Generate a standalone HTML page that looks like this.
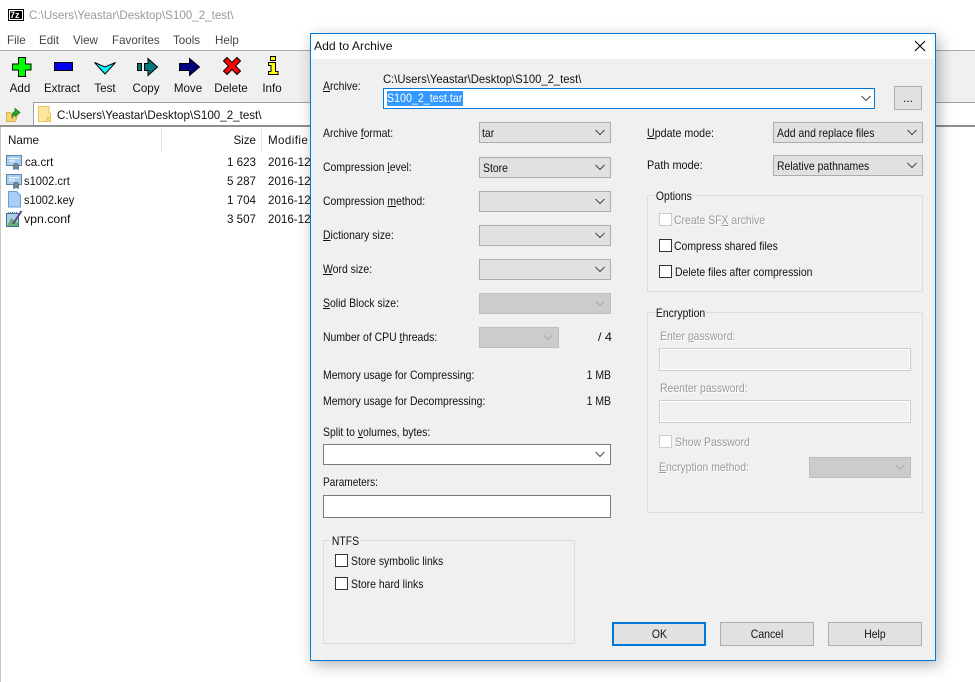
<!DOCTYPE html>
<html><head><meta charset="utf-8"><title>Add to Archive</title>
<style>
html,body{margin:0;padding:0;background:#fff}
body{width:975px;height:682px;overflow:hidden;position:relative;font-family:"Liberation Sans",sans-serif;font-size:11.6px;color:#111}
.a{position:absolute}
.t{position:absolute;line-height:16px;height:16px;white-space:nowrap;margin-top:1px}
.r{text-align:right}
.c{text-align:center}
.g{color:#9a9a9a;text-shadow:1px 1px 0 #fff}
.m{color:#444}
u{text-decoration:underline;text-underline-offset:1px}
.dlg .t{transform:scaleX(.9);transform-origin:0 50%}
.dlg .t.r{transform-origin:100% 50%}
.cb{position:absolute;box-sizing:border-box;height:21px;background:#e1e1e1;border:1px solid #adadad}
.cb.d{background:#ccc;border-color:#bfbfbf}
.cb.w{background:#fff;border-color:#7a7a7a}
.cb svg{position:absolute;right:5px;top:6px}
.ck{position:absolute;box-sizing:border-box;width:13px;height:13px;background:#fff;border:1px solid #333}
.ck.d{border-color:#ccc}
.gb{position:absolute;box-sizing:border-box;border:1px solid #dcdcdc}
.lg{background:#f0f0f0;padding:0 1px}
.btn{position:absolute;box-sizing:border-box;height:24px;width:94px;top:622px;background:#e1e1e1;border:1px solid #adadad;text-align:center;line-height:23px}
.btn span{display:inline-block;transform:scaleX(.9)}
.in{position:absolute;box-sizing:border-box;background:#fff;border:1px solid #7a7a7a}
.dis{position:absolute;box-sizing:border-box;left:659px;width:252px;height:23px;background:#f0f0f0;border:1px solid #ccc;box-shadow:inset 0 0 0 1px #fff}
</style></head><body>

<!-- main window -->
<div class="a" style="left:0;top:50px;width:975px;height:1px;background:#a9a9a9"></div>
<div class="a" style="left:0;top:51px;width:975px;height:75px;background:#f0f0f0"></div>
<div class="a" style="left:33px;top:102px;width:942px;height:1px;background:#a0a0a0"></div>
<div class="a" style="left:33px;top:103px;width:942px;height:22px;background:#fff;border-left:1px solid #a0a0a0;box-sizing:border-box"></div>
<div class="a" style="left:0;top:125px;width:975px;height:2px;background:#8f8f8f"></div>
<div class="a" style="left:0;top:127px;width:1px;height:555px;background:#c8c8c8"></div>

<svg class="a" style="left:8px;top:9px" width="16" height="12"><rect x="0.500" y="0.500" width="15" height="11" fill="#fff" stroke="#000"/><rect x="2" y="2" width="12" height="8" fill="#000"/></svg>
<div class="t" style="left:10px;top:7px;color:#fff;font-size:9px;font-weight:bold;line-height:14px">7z</div>
<div class="t" style="left:29px;top:7px;color:#999">C:\Users\Yeastar\Desktop\S100_2_test\</div>

<div class="t m" style="left:7px;top:32px">File</div>
<div class="t m" style="left:39px;top:32px">Edit</div>
<div class="t m" style="left:73px;top:32px">View</div>
<div class="t m" style="left:112px;top:32px">Favorites</div>
<div class="t m" style="left:173px;top:32px">Tools</div>
<div class="t m" style="left:215px;top:32px">Help</div>

<!-- toolbar icons -->
<svg class="a" style="left:0;top:50px" width="300" height="30" stroke="#000" stroke-width="1" stroke-linejoin="miter">
<path d="M18.500 7.500h7v6.500h5.500v6h-5.500v6.500h-7V20h-6v-6h6z" fill="#00ff00"/>
<rect x="54.500" y="12.500" width="18" height="8" fill="#0000ee"/>
<path d="M94.500 12.500L105 17L115.500 12.500L105 24z" fill="#00ffff"/>
<rect x="137.500" y="13.500" width="4" height="7" fill="#007878"/>
<path d="M144.500 13.500h3.500V8.500L157.500 17L148 25.500V20.500h-3.500z" fill="#007878"/>
<path d="M179.500 13.500h10V8.500L199.500 17L189.500 25.500V20.500h-10z" fill="#000080"/>
<path d="M223.500 11L227 7.500L232 12.500L237 7.500L240.500 11L235.500 16L240.500 21L237 24.500L232 19.500L227 24.500L223.500 21L228.500 16z" fill="#ff0000"/>
<path d="M270.500 6.500h5v4h-5zM268.500 12.500h7v9h2.500v3h-9.500v-3h2.500v-6h-2.500z" fill="#ffff00"/>
</svg>
<div class="t c" style="left:0;top:80px;width:40px">Add</div>
<div class="t c" style="left:40px;top:80px;width:44px">Extract</div>
<div class="t c" style="left:85px;top:80px;width:40px">Test</div>
<div class="t c" style="left:126px;top:80px;width:40px">Copy</div>
<div class="t c" style="left:168px;top:80px;width:40px">Move</div>
<div class="t c" style="left:208px;top:80px;width:46px">Delete</div>
<div class="t c" style="left:252px;top:80px;width:40px">Info</div>

<!-- up folder -->
<svg class="a" style="left:5px;top:105px" width="16" height="18">
<path d="M1.500 7.500h3.500l2 1.500h5.500L10.500 16.500H1.500z" fill="#f6d670" stroke="#d4b050"/>
<path d="M7 13.500C6.500 9 8 7 10 6.500V3.500L15 7.500L10 11.500V9C8.500 9.500 7.500 11 7 13.500z" fill="#35a535" stroke="#17701c" stroke-width=".8"/>
</svg>
<!-- address folder -->
<svg class="a" style="left:37px;top:105px" width="16" height="18">
<path d="M1.500 1.500h10.500v6l1.500 1v8H1.500z" fill="#fde7a0" stroke="#e8c65e"/><path d="M10 12.500h3.500v4H10z" fill="#f6d670" stroke="#e8c65e"/>
</svg>
<div class="t" style="left:57px;top:107px">C:\Users\Yeastar\Desktop\S100_2_test\</div>

<!-- list -->
<div class="a" style="left:161px;top:128px;width:1px;height:24px;background:#e5e5e5"></div>
<div class="a" style="left:261px;top:128px;width:1px;height:24px;background:#e5e5e5"></div>
<div class="t" style="left:8px;top:132px">Name</div>
<div class="t r" style="left:216px;top:132px;width:40px">Size</div>
<div class="t" style="left:268px;top:132px;width:42px;overflow:hidden;letter-spacing:.4px">Modifie</div>

<svg class="a" style="left:5px;top:153px" width="19" height="76">
<g><rect x="1.500" y="2.500" width="15" height="10" fill="#a9cdf0" stroke="#5f87ad"/><path d="M4 5.500h10M4 8h6" stroke="#fff"/><path d="M9 13v4M13 13v4" stroke="#3f7fd0" stroke-width="1.500"/><circle cx="11" cy="13" r="2.500" fill="#7a8b8b" stroke="#5a6a6a"/></g>
<g transform="translate(0,19)"><rect x="1.500" y="2.500" width="15" height="10" fill="#a9cdf0" stroke="#5f87ad"/><path d="M4 5.500h10M4 8h6" stroke="#fff"/><path d="M9 13v4M13 13v4" stroke="#3f7fd0" stroke-width="1.500"/><circle cx="11" cy="13" r="2.500" fill="#7a8b8b" stroke="#5a6a6a"/></g>
<path d="M3.500 38.500h8l4 4v11.500h-12z" fill="#a9cdf5" stroke="#6c9bd0"/>
<path d="M1.500 60.500h12v13h-12z" fill="#a9d0e8" stroke="#3f6f98"/><path d="M2 73L6 65L13 70V73z" fill="#6fb06f"/><path d="M3 59.500h9" stroke="#5f7a95" stroke-dasharray="1 1"/><path d="M8 71L16.500 58" stroke="#5b4a8a" stroke-width="2"/>
</svg>
<div class="t" style="left:25px;top:154px">ca.crt</div>
<div class="t" style="left:24px;top:173px;transform:scaleX(.96);transform-origin:0 0">s1002.crt</div>
<div class="t" style="left:24px;top:192px;transform:scaleX(.95);transform-origin:0 0">s1002.key</div>
<div class="t" style="left:24px;top:211px;transform:scaleX(1.06);transform-origin:0 0">vpn.conf</div>
<div class="t r" style="left:206px;top:154px;width:50px">1 623</div>
<div class="t r" style="left:206px;top:173px;width:50px">5 287</div>
<div class="t r" style="left:206px;top:192px;width:50px">1 704</div>
<div class="t r" style="left:206px;top:211px;width:50px">3 507</div>
<div class="t" style="left:268px;top:154px;width:42px;overflow:hidden">2016-12-</div>
<div class="t" style="left:268px;top:173px;width:42px;overflow:hidden">2016-12-</div>
<div class="t" style="left:268px;top:192px;width:42px;overflow:hidden">2016-12-</div>
<div class="t" style="left:268px;top:211px;width:42px;overflow:hidden">2016-12-</div>

<!-- dialog -->
<div class="a" style="left:310px;top:33px;width:626px;height:628px;box-sizing:border-box;background:#f0f0f0;border:1px solid #0078d7;box-shadow:3px 4px 14px rgba(0,0,0,.3)"></div>
<div class="a" style="left:311px;top:34px;width:624px;height:25px;background:#fff"></div>
<div class="dlg">
<div class="t" style="left:314px;top:38px;transform:scaleX(1.05)">Add to Archive</div>
<svg class="a" style="left:914px;top:40px" width="12" height="12"><path d="M1 1L11 11M11 1L1 11" stroke="#000" stroke-width="1.100"/></svg>

<div class="t" style="left:323px;top:78px"><u>A</u>rchive:</div>
<div class="t" style="left:383px;top:71px;transform:scaleX(.97)">C:\Users\Yeastar\Desktop\S100_2_test\</div>
<div class="in" style="left:383px;top:88px;width:492px;height:21px;border-color:#0078d7"></div>
<div class="a" style="left:387px;top:91px;width:76px;height:15px;background:#3399ff"></div>
<div class="t" style="left:387px;top:90px;color:#fff;transform:scaleX(.92)">S100_2_test.tar</div>
<svg class="a" style="left:861px;top:95px" width="10" height="7"><path d="M.5 1L5 5.500L9.500 1" fill="none" stroke="#444"/></svg>
<div class="a" style="left:894px;top:86px;width:28px;height:24px;box-sizing:border-box;background:#e1e1e1;border:1px solid #adadad;text-align:center;line-height:24px">...</div>

<div class="t" style="left:323px;top:125px">Archive <u>f</u>ormat:</div>
<div class="t" style="left:323px;top:159px">Compression <u>l</u>evel:</div>
<div class="t" style="left:323px;top:193px">Compression <u>m</u>ethod:</div>
<div class="t" style="left:323px;top:227px"><u>D</u>ictionary size:</div>
<div class="t" style="left:323px;top:261px"><u>W</u>ord size:</div>
<div class="t" style="left:323px;top:295px"><u>S</u>olid Block size:</div>
<div class="t" style="left:323px;top:329px">Number of CPU <u>t</u>hreads:</div>
<div class="t" style="left:323px;top:367px">Memory usage for Compressing:</div>
<div class="t" style="left:323px;top:393px">Memory usage for Decompressing:</div>
<div class="t" style="left:323px;top:424px">Split to <u>v</u>olumes, bytes:</div>
<div class="t" style="left:323px;top:474px;transform:scaleX(.87)">Parameters:</div>

<div class="cb" style="left:479px;top:122px;width:132px"><svg width="10" height="7"><path d="M.5 1L5 5.500L9.500 1" fill="none" stroke="#444"/></svg></div>
<div class="t" style="left:482px;top:125px">tar</div>
<div class="cb" style="left:479px;top:157px;width:132px"><svg width="10" height="7"><path d="M.5 1L5 5.500L9.500 1" fill="none" stroke="#444"/></svg></div>
<div class="t" style="left:483px;top:160px">Store</div>
<div class="cb" style="left:479px;top:191px;width:132px"><svg width="10" height="7"><path d="M.5 1L5 5.500L9.500 1" fill="none" stroke="#444"/></svg></div>
<div class="cb" style="left:479px;top:225px;width:132px"><svg width="10" height="7"><path d="M.5 1L5 5.500L9.500 1" fill="none" stroke="#444"/></svg></div>
<div class="cb" style="left:479px;top:259px;width:132px"><svg width="10" height="7"><path d="M.5 1L5 5.500L9.500 1" fill="none" stroke="#444"/></svg></div>
<div class="cb d" style="left:479px;top:293px;width:132px"><svg width="10" height="7"><path d="M.5 1L5 5.500L9.500 1" fill="none" stroke="#aaa"/></svg></div>
<div class="cb d" style="left:479px;top:327px;width:80px"><svg width="10" height="7"><path d="M.5 1L5 5.500L9.500 1" fill="none" stroke="#aaa"/></svg></div>
<div class="t r" style="left:572px;top:329px;width:40px;transform:scaleX(1.1)">/ 4</div>
<div class="t r" style="left:551px;top:367px;width:60px">1 MB</div>
<div class="t r" style="left:551px;top:393px;width:60px">1 MB</div>
<div class="cb w" style="left:323px;top:444px;width:288px"><svg width="10" height="7"><path d="M.5 1L5 5.500L9.500 1" fill="none" stroke="#444"/></svg></div>
<div class="in" style="left:323px;top:495px;width:288px;height:23px"></div>

<div class="t" style="left:647px;top:125px;transform:scaleX(.92)"><u>U</u>pdate mode:</div>
<div class="t" style="left:647px;top:157px;transform:scaleX(.94)">Path mode:</div>
<div class="cb" style="left:773px;top:122px;width:150px"><svg width="10" height="7"><path d="M.5 1L5 5.500L9.500 1" fill="none" stroke="#444"/></svg></div>
<div class="t" style="left:777px;top:125px">Add and replace files</div>
<div class="cb" style="left:773px;top:155px;width:150px"><svg width="10" height="7"><path d="M.5 1L5 5.500L9.500 1" fill="none" stroke="#444"/></svg></div>
<div class="t" style="left:777px;top:158px">Relative pathnames</div>

<div class="gb" style="left:647px;top:195px;width:276px;height:97px"></div>
<div class="t lg" style="left:655px;top:188px">Options</div>
<div class="ck d" style="left:659px;top:213px"></div>
<div class="t g" style="left:674px;top:212px">Create SF<u>X</u> archive</div>
<div class="ck" style="left:659px;top:239px"></div>
<div class="t" style="left:674px;top:238px">Compress shared files</div>
<div class="ck" style="left:659px;top:265px"></div>
<div class="t" style="left:675px;top:264px">Delete files after compression</div>

<div class="gb" style="left:647px;top:312px;width:276px;height:201px"></div>
<div class="t lg" style="left:655px;top:305px">Encryption</div>
<div class="t g" style="left:660px;top:328px">Enter <u>p</u>assword:</div>
<div class="dis" style="top:348px"></div>
<div class="t g" style="left:660px;top:380px">Reenter password:</div>
<div class="dis" style="top:400px"></div>
<div class="ck d" style="left:659px;top:435px"></div>
<div class="t g" style="left:675px;top:434px">Show Password</div>
<div class="t g" style="left:659px;top:459px"><u>E</u>ncryption method:</div>
<div class="cb d" style="left:809px;top:457px;width:102px"><svg width="10" height="7"><path d="M.5 1L5 5.500L9.500 1" fill="none" stroke="#aaa"/></svg></div>

<div class="gb" style="left:323px;top:540px;width:252px;height:104px"></div>
<div class="t lg" style="left:331px;top:533px">NTFS</div>
<div class="ck" style="left:335px;top:554px"></div>
<div class="t" style="left:351px;top:553px">Store symbolic links</div>
<div class="ck" style="left:335px;top:577px"></div>
<div class="t" style="left:351px;top:576px">Store hard links</div>

<div class="btn" style="left:612px;border:2px solid #0078d7;line-height:21px"><span>OK</span></div>
<div class="btn" style="left:720px"><span>Cancel</span></div>
<div class="btn" style="left:828px"><span>Help</span></div>
</div>
</body></html>
